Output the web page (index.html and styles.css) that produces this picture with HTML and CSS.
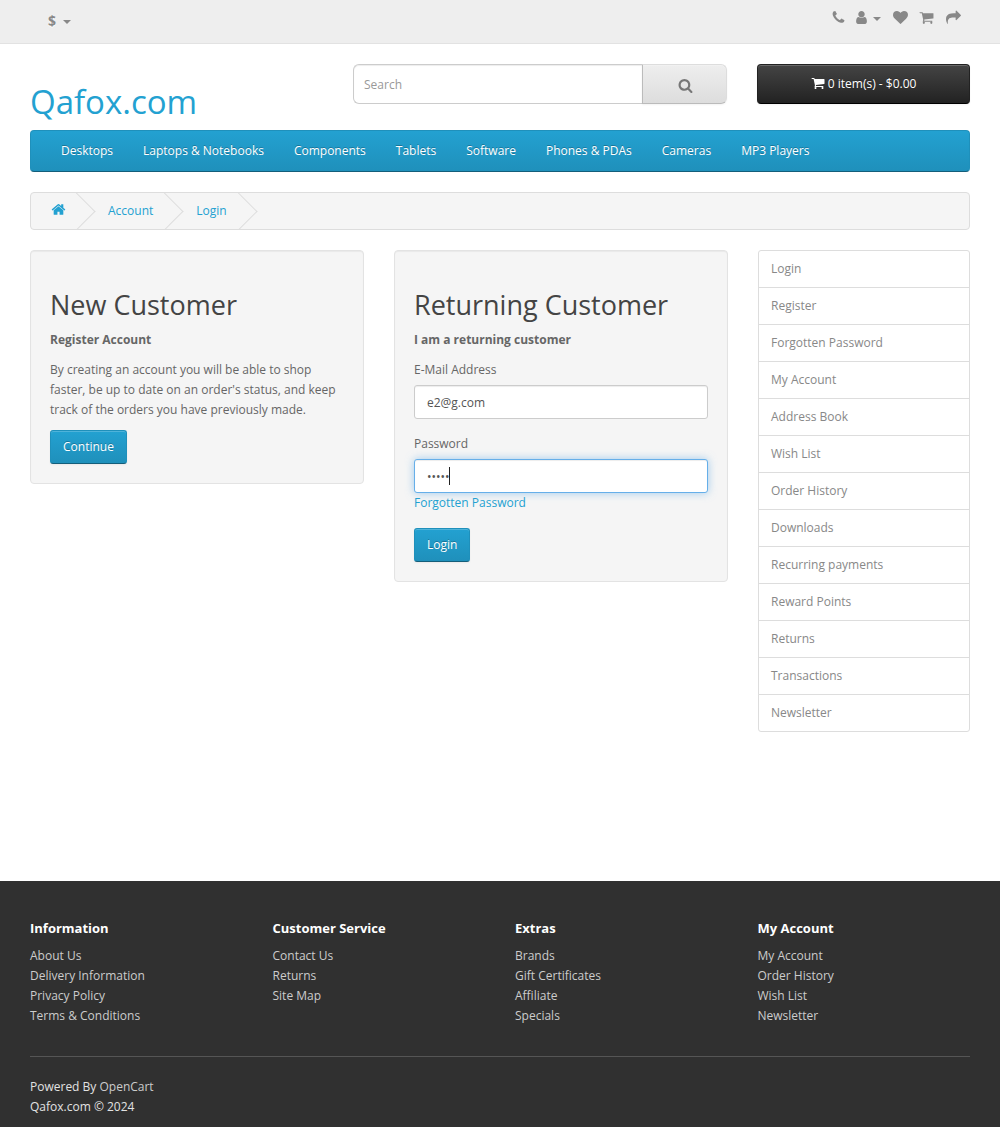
FILE: index.html
```html
<!DOCTYPE html>
<html lang="en">
<head>
<meta charset="utf-8">
<title>Account Login</title>
<link rel="stylesheet" href="styles.css">
</head>
<body>
<svg class="sprite" aria-hidden="true">
  <symbol id="i-phone" viewBox="0 0 1792 1792"><path d="M1600 1240q0 27-10 70.5t-21 68.5q-21 50-122 106-94 51-186 51-27 0-53-3.5t-57.5-12.5-47-14.5-55.5-20.5-49-18q-98-35-175-83-127-79-264-216t-216-264q-48-77-83-175-3-9-18-49t-20.5-55.5-14.5-47-12.5-57.5-3.5-53q0-92 51-186 56-101 106-122 25-11 68.5-21t70.5-10q14 0 21 3 18 6 53 76 11 19 30 54t35 63.5 31 53.5q3 4 17.5 25t21.5 35.5 7 28.5q0 20-28.5 50t-62 55-62 53-28.5 46q0 9 5 22.5t8.5 20.5 14 24 11.5 19q76 137 174 235t235 174q2 1 19 11.5t24 14 20.5 8.5 22.5 5q18 0 46-28.5t53-62 55-62 50-28.5q14 0 28.5 7t35.5 21.5 25 17.5q25 15 53.5 31t63.5 35 54 30q70 35 76 53 3 7 3 21z"/></symbol>
  <symbol id="i-user" viewBox="0 0 1792 1792"><path d="M1536 1399q0 109-62.5 187t-150.5 78h-854q-88 0-150.5-78t-62.5-187q0-85 8.5-160.5t31.5-152 58.5-131 94-89 134.5-34.5q131 128 313 128t313-128q76 0 134.5 34.5t94 89 58.5 131 31.5 152 8.5 160.5zm-256-887q0 159-112.5 271.5t-271.5 112.5-271.5-112.5-112.5-271.5 112.5-271.5 271.5-112.5 271.5 112.5 112.5 271.5z"/></symbol>
  <symbol id="i-heart" viewBox="0 0 1792 1792"><path d="M896 1664q-26 0-44-18l-624-602q-10-8-27.5-26t-55.5-65.5-68-97.5-53.5-121-23.5-138q0-220 127-344t351-124q62 0 126.5 21.5t120 58 95.5 68.5 76 68q36-36 76-68t95.5-68.5 120-58 126.5-21.5q224 0 351 124t127 344q0 221-229 450l-623 600q-18 18-44 18z"/></symbol>
  <symbol id="i-cart" viewBox="0 0 1792 1792"><path d="M704 1536q0 52-38 90t-90 38-90-38-38-90 38-90 90-38 90 38 38 90zm896 0q0 52-38 90t-90 38-90-38-38-90 38-90 90-38 90 38 38 90zm128-1088v512q0 24-16.5 42.5t-40.5 21.5l-1044 122q13 60 13 70 0 16-24 64h920q26 0 45 19t19 45-19 45-45 19h-1024q-26 0-45-19t-19-45q0-11 8-31.5t16-36 21.5-40 15.5-29.5l-177-823h-204q-26 0-45-19t-19-45 19-45 45-19h256q16 0 28.5 6.5t19.5 15.5 13 24.5 8 26 5.5 29.5 4.5 26h1201q26 0 45 19t19 45z"/></symbol>
  <symbol id="i-share" viewBox="0 0 1792 1792"><path d="M1792 640q0 26-19 45l-512 512q-19 19-45 19t-45-19-19-45v-256h-224q-98 0-175.5 6t-154 21.5-133 42.5-105.5 69.5-80 101-48.5 138.5-17.5 181q0 55 5 123 0 6 2.5 23.5t2.5 26.5q0 15-8.5 25t-23.5 10q-16 0-28-17-7-9-13-22t-13.5-30-10.5-24q-127-285-127-451 0-199 53-333 162-403 875-403h224v-256q0-26 19-45t45-19 45 19l512 512q19 19 19 45z"/></symbol>
  <symbol id="i-search" viewBox="0 0 1792 1792"><path d="M1216 832q0-185-131.5-316.5t-316.5-131.5-316.5 131.5-131.5 316.5 131.5 316.5 316.5 131.5 316.5-131.5 131.5-316.5zm512 832q0 52-38 90t-90 38q-54 0-90-38l-343-342q-179 124-399 124-143 0-273.5-55.5t-225-150-150-225-55.5-273.5 55.5-273.5 150-225 225-150 273.5-55.5 273.5 55.5 225 150 150 225 55.5 273.5q0 220-124 399l343 343q37 37 37 90z"/></symbol>
  <symbol id="i-home" viewBox="0 0 1792 1792"><path d="M1472 992v480q0 26-19 45t-45 19h-384v-384h-256v384h-384q-26 0-45-19t-19-45v-480q0-1 .5-3t.5-3l575-474 575 474q1 2 1 6zm223-69l-62 74q-8 9-21 11h-3q-13 0-21-7l-692-577-692 577q-12 8-24 7-13-2-21-11l-62-74q-8-10-7-23.5t11-21.5l719-599q32-26 76-26t76 26l244 204v-195q0-14 9-23t23-9h192q14 0 23 9t9 23v408l219 182q10 8 11 21.5t-7 23.5z"/></symbol>
</svg>

<nav class="top">
  <div class="wrap top-row">
    <a class="currency" href="#"><strong>$</strong><span class="caret"></span></a>
    <ul class="top-links">
      <li class="tight"><a href="#"><svg class="ic ic-15"><use href="#i-phone"/></svg></a></li>
      <li><a href="#"><svg class="ic ic-15"><use href="#i-user"/></svg><span class="caret caret-near"></span></a></li>
      <li><a href="#"><svg class="ic ic-15"><use href="#i-heart"/></svg></a></li>
      <li><a href="#"><svg class="ic ic-15"><use href="#i-cart"/></svg></a></li>
      <li><a href="#"><svg class="ic ic-15"><use href="#i-share"/></svg></a></li>
    </ul>
  </div>
</nav>

<header class="wrap head">
  <h1 class="logo"><a href="#">Qafox.com</a></h1>
  <form class="search">
    <input class="search-input" type="text" placeholder="Search">
    <button class="search-btn" type="button"><svg class="ic ic-15"><use href="#i-search"/></svg></button>
  </form>
  <button class="cart" type="button"><svg class="ic ic-14"><use href="#i-cart"/></svg> 0 item(s) - $0.00</button>
</header>

<div class="wrap">
  <nav class="menu">
    <ul>
      <li><a href="#">Desktops</a></li>
      <li><a href="#">Laptops &amp; Notebooks</a></li>
      <li><a href="#">Components</a></li>
      <li><a href="#">Tablets</a></li>
      <li><a href="#">Software</a></li>
      <li><a href="#">Phones &amp; PDAs</a></li>
      <li><a href="#">Cameras</a></li>
      <li><a href="#">MP3 Players</a></li>
    </ul>
  </nav>

  <ul class="crumbs">
    <li><a href="#"><svg class="ic ic-home"><use href="#i-home"/></svg></a></li>
    <li><a href="#">Account</a></li>
    <li><a href="#">Login</a></li>
  </ul>

  <div class="layout">
    <main class="panels">
      <section class="well">
        <h2>New Customer</h2>
        <p><strong>Register Account</strong></p>
        <p>By creating an account you will be able to shop faster, be up to date on an order's status, and keep track of the orders you have previously made.</p>
        <a class="btn" href="#">Continue</a>
      </section>
      <section class="well">
        <h2>Returning Customer</h2>
        <p><strong>I am a returning customer</strong></p>
        <form>
          <div class="field">
            <label for="email">E-Mail Address</label>
            <input class="control" id="email" type="text" value="e2@g.com">
          </div>
          <div class="field">
            <label for="pw">Password</label>
            <div class="pw-box">
              <input class="control is-focus" id="pw" type="password" value="12345">
              <span class="text-caret"></span>
            </div>
            <a class="forgot" href="#">Forgotten Password</a>
          </div>
          <a class="btn" href="#">Login</a>
        </form>
      </section>
    </main>
    <aside class="side">
      <a href="#">Login</a>
      <a href="#">Register</a>
      <a href="#">Forgotten Password</a>
      <a href="#">My Account</a>
      <a href="#">Address Book</a>
      <a href="#">Wish List</a>
      <a href="#">Order History</a>
      <a href="#">Downloads</a>
      <a href="#">Recurring payments</a>
      <a href="#">Reward Points</a>
      <a href="#">Returns</a>
      <a href="#">Transactions</a>
      <a href="#">Newsletter</a>
    </aside>
  </div>
</div>

<footer class="foot">
  <div class="wrap">
    <div class="foot-cols">
      <div>
        <h5>Information</h5>
        <ul>
          <li><a href="#">About Us</a></li>
          <li><a href="#">Delivery Information</a></li>
          <li><a href="#">Privacy Policy</a></li>
          <li><a href="#">Terms &amp; Conditions</a></li>
        </ul>
      </div>
      <div>
        <h5>Customer Service</h5>
        <ul>
          <li><a href="#">Contact Us</a></li>
          <li><a href="#">Returns</a></li>
          <li><a href="#">Site Map</a></li>
        </ul>
      </div>
      <div>
        <h5>Extras</h5>
        <ul>
          <li><a href="#">Brands</a></li>
          <li><a href="#">Gift Certificates</a></li>
          <li><a href="#">Affiliate</a></li>
          <li><a href="#">Specials</a></li>
        </ul>
      </div>
      <div>
        <h5>My Account</h5>
        <ul>
          <li><a href="#">My Account</a></li>
          <li><a href="#">Order History</a></li>
          <li><a href="#">Wish List</a></li>
          <li><a href="#">Newsletter</a></li>
        </ul>
      </div>
    </div>
    <hr>
    <p class="powered">Powered By <a href="#">OpenCart</a><br>Qafox.com &copy; 2024</p>
  </div>
</footer>
</body>
</html>
```
FILE: styles.css
```css
* { box-sizing: border-box; }
html, body { margin: 0; padding: 0; }
body {
  font-family: "Open Sans", sans-serif;
  font-size: 12px;
  line-height: 20px;
  color: #666;
  background: #fff;
}
a { color: #23a1d1; text-decoration: none; }
ul { list-style: none; margin: 0; padding: 0; }
.sprite { display: none; }
.ic { display: inline-block; fill: currentColor; vertical-align: -2px; }
.ic-14 { width: 14px; height: 14px; }
.ic-15 { width: 15px; height: 15px; }
.ic-home { width: 15px; height: 15px; margin: 0 -.5px; vertical-align: -2px; }
.wrap { width: 940px; margin: 0 auto; }

/* top bar */
.top {
  height: 44px;
  margin-bottom: 20px;
  background: #eee;
  border-bottom: 1px solid #e2e2e2;
}
.top-row { display: flex; justify-content: space-between; align-items: center; height: 40px; }
.top a { color: #888; text-shadow: 0 1px 0 #fff; }
.currency { margin-left: 18px; padding-top: 1px; font-size: 14px; }
.caret {
  display: inline-block;
  margin-left: 7px;
  vertical-align: middle;
  border-top: 4px solid #888;
  border-left: 4px solid transparent;
  border-right: 4px solid transparent;
}
.caret-near { margin-left: 3.5px; }
.top-links { display: flex; gap: 11.75px; margin-right: 9px; padding-bottom: 3px; align-items: center; }
.top-links .tight { margin-right: -3.75px; }

/* header */
.head { display: flex; align-items: flex-start; height: 66px; position: relative; }
.logo { width: 323px; margin: 16px 0 0; font-size: 33px; font-weight: 400; line-height: 44px; }
.search { display: flex; width: 374px; height: 40px; }
.search-input {
  flex: 1;
  min-width: 0;
  height: 40px;
  padding: 10px;
  font: 12px/20px "Open Sans", sans-serif;
  color: #555;
  background: #fff;
  border: 1px solid #ccc;
  border-right: 0;
  border-radius: 6px 0 0 6px;
  box-shadow: inset 0 1px 1px rgba(0,0,0,.075);
  outline: 0;
}
.search-input::placeholder { color: #999; opacity: 1; }
.search-btn {
  width: 85px;
  height: 40px;
  padding: 3px 0 0 2px;
  color: #777;
  background: linear-gradient(to bottom, #eee, #ddd);
  border: 1px solid #ccc;
  border-color: #ddd #ddd #bbb #bbb;
  border-radius: 0 6px 6px 0;
  box-shadow: inset 0 1px 0 rgba(255,255,255,.2), 0 1px 2px rgba(0,0,0,.05);
}
.cart {
  width: 213px;
  height: 40px;
  margin-left: 30px;
  padding: 0;
  font: 12px/18px "Open Sans", sans-serif;
  color: #fff;
  text-shadow: 0 -1px 0 rgba(0,0,0,.25);
  background: linear-gradient(to bottom, #444, #222);
  border: 1px solid #222;
  border-color: #222 #222 #000;
  border-radius: 4px;
  box-shadow: inset 0 1px 0 rgba(255,255,255,.2), 0 1px 2px rgba(0,0,0,.05);
}

/* menu */
.menu {
  height: 42px;
  margin-bottom: 20px;
  background: linear-gradient(to bottom, #23a1d1, #1f90bb);
  border: 1px solid #1f90bb;
  border-bottom-color: #145e7a;
  border-radius: 4px;
}
.menu ul { display: flex; margin-left: 15px; }
.menu a {
  display: block;
  padding: 10px 15px;
  color: #fff;
  text-shadow: 0 -1px 0 rgba(0,0,0,.25);
}

/* breadcrumb */
.crumbs {
  display: flex;
  gap: 3px;
  height: 38px;
  margin-bottom: 20px;
  padding: 8px 0;
  overflow: hidden;
  background: #f5f5f5;
  border: 1px solid #ddd;
  border-radius: 4px;
}
.crumbs li { position: relative; padding: 0 20px; white-space: nowrap; }
.crumbs li::after {
  content: "";
  position: absolute;
  top: -3px;
  right: -5px;
  width: 26px;
  height: 26px;
  border-right: 1px solid #ddd;
  border-bottom: 1px solid #ddd;
  transform: rotate(-45deg);
}

/* content */
.layout { display: flex; gap: 30px; align-items: flex-start; margin-bottom: 149px; }
.panels { display: grid; grid-template-columns: 334px 334px; gap: 30px; align-items: start; }
.well {
  padding: 19px;
  background: #f5f5f5;
  border: 1px solid #e3e3e3;
  border-radius: 4px;
  box-shadow: inset 0 1px 1px rgba(0,0,0,.05);
}
.well h2 {
  margin: 20px 0 10px;
  font-size: 27px;
  font-weight: 400;
  line-height: 30px;
  color: #444;
}
.well p { margin: 0 0 10px; }
.well strong { font-weight: 700; }
.btn {
  display: inline-block;
  height: 34px;
  padding: 7px 12px;
  font-size: 12px;
  line-height: 18px;
  color: #fff;
  text-shadow: 0 -1px 0 rgba(0,0,0,.25);
  background: linear-gradient(to bottom, #23a1d1, #1f90bb);
  border: 1px solid #1f90bb;
  border-bottom-color: #145e7a;
  border-radius: 3px;
  box-shadow: inset 0 1px 0 rgba(255,255,255,.2), 0 1px 2px rgba(0,0,0,.05);
  vertical-align: top;
}
.field { margin-bottom: 15px; }
.field label { display: block; margin-bottom: 5px; }
.control {
  display: block;
  width: 100%;
  height: 34px;
  padding: 6px 12px;
  font: 12px/20px "Open Sans", sans-serif;
  color: #555;
  background: #fff;
  border: 1px solid #ccc;
  border-radius: 3px;
  box-shadow: inset 0 1px 1px rgba(0,0,0,.075);
  outline: 0;
}
.is-focus {
  border-color: #66afe9;
  box-shadow: inset 0 1px 1px rgba(0,0,0,.075), 0 0 8px rgba(102,175,233,.6);
}
.pw-box { position: relative; }
.text-caret {
  position: absolute;
  left: 35px;
  top: 8px;
  width: 1px;
  height: 18px;
  background: #222;
}
.forgot { display: block; }

/* sidebar */
.side { display: flex; flex-direction: column; width: 212px; }
.side a {
  display: block;
  height: 38px;
  margin-bottom: -1px;
  padding: 8px 12px;
  color: #888;
  background: #fff;
  border: 1px solid #ddd;
}
.side a:first-child { border-radius: 3px 3px 0 0; }
.side a:last-child { margin-bottom: 0; border-radius: 0 0 3px 3px; }

/* footer */
.foot { height: 246px; padding-top: 30px; color: #e2e2e2; background: #303030; }
.foot-cols { display: grid; grid-template-columns: repeat(4, 212.5px); column-gap: 30px; margin-bottom: 30px; }
.foot h5 { margin: 10px 0 11px; font-size: 13px; font-weight: 700; line-height: 14px; color: #fff; }
.foot a { color: #ccc; }
.foot hr { margin: 20px 0; border: 0; border-top: 1px solid #555; }
.powered { margin: 0; }
```
